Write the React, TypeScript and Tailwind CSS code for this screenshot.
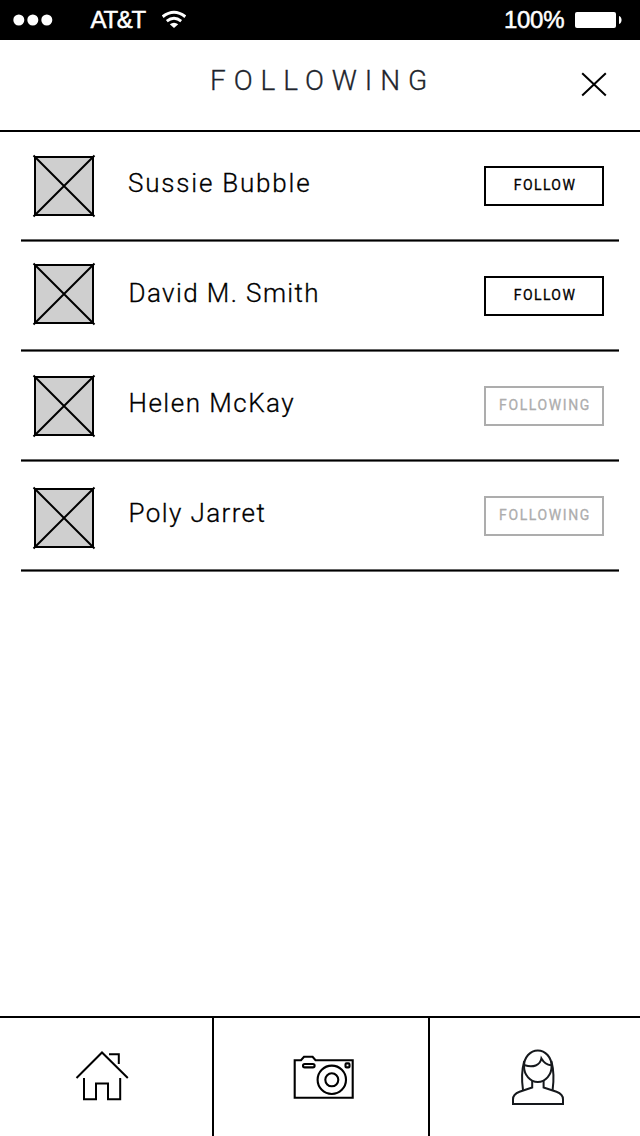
import React from "react";

type Person = {
  name: string;
  following: boolean;
  avatarOffset: string;
  nameStyle: string;
};

const people: Person[] = [
  { name: "Sussie Bubble", following: false, avatarOffset: "mt-[22px]", nameStyle: "ml-[32px] tracking-[1.8px]" },
  { name: "David M. Smith", following: false, avatarOffset: "mt-[20px]", nameStyle: "ml-[32.5px] tracking-[1.4px]" },
  { name: "Helen McKay", following: true, avatarOffset: "mt-[22px]", nameStyle: "ml-[32.5px] tracking-[1.5px]" },
  { name: "Poly Jarret", following: true, avatarOffset: "mt-[24px]", nameStyle: "ml-[32.5px] tracking-[1.4px]" },
];

function StatusBar() {
  return (
    <div className="flex h-10 shrink-0 items-center bg-black font-['Liberation_Sans',sans-serif] text-[24px] leading-none text-white">
      <svg className="ml-3 block" width="42" height="40" viewBox="0 0 42 40" fill="white">
        <circle cx="6.8" cy="20" r="5.5" />
        <circle cx="20.8" cy="20" r="5.5" />
        <circle cx="34.8" cy="20" r="5.5" />
      </svg>
      <span className="ml-[36.5px] w-[71.5px] tracking-[-1.3px] [-webkit-text-stroke:0.5px_white]">AT&amp;T</span>
      <svg className="block" width="24" height="40" viewBox="162 0 24 40" fill="none" stroke="white">
        <path d="M162.7 16.7Q174 7.8 185.3 16.7" strokeWidth="3" />
        <path d="M166.8 21.2Q174 15.4 181.2 21.2" strokeWidth="2.8" />
        <path d="M169.8 24.3Q174 21 178.2 24.3L174 28Z" fill="white" stroke="none" />
      </svg>
      <div className="ml-auto flex items-center">
        <span className="w-[70px] tracking-[-0.3px] [-webkit-text-stroke:0.5px_white]">100%</span>
        <svg className="mr-[16px] block" width="50" height="40" viewBox="574 0 50 40" fill="white">
          <rect x="575" y="12" width="41" height="16" rx="2" />
          <path d="M619 16C622.4 16.8 622.4 23.2 619 24Z" />
        </svg>
      </div>
    </div>
  );
}

function Header() {
  return (
    <header className="flex h-[92px] shrink-0 items-start justify-between border-b-2 border-black">
      <h1 className="ml-[210px] mt-[25px] whitespace-nowrap text-[28px] font-light leading-8 tracking-[7.9px] text-[#20242c] [-webkit-text-stroke:0.3px_#20242c]">
        FOLLOWING
      </h1>
      <button className="mr-[32px] mt-[31px]" aria-label="Close">
        <svg className="block" width="28" height="28" viewBox="0 0 28 28" stroke="black" strokeWidth="2">
          <path d="M2.2 2.2L25.8 24.6M25.8 2.2L2.2 24.6" />
        </svg>
      </button>
    </header>
  );
}

function Avatar() {
  return (
    <svg className="block" width="64" height="64" viewBox="0 0 64 64" stroke="black" strokeWidth="2" fill="none">
      <rect x="3" y="3" width="58" height="58" fill="#cfcfcf" />
      <path d="M1.5 1.5L62.5 62.5M62.5 1.5L1.5 62.5" />
    </svg>
  );
}

function Divider() {
  return (
    <div className="flex h-[3px] flex-col">
      <div className="h-px bg-[#666666]" />
      <div className="h-px bg-black" />
      <div className="h-px bg-[#666666]" />
    </div>
  );
}

function PersonRow({ person }: { person: Person }) {
  return (
    <li className="flex h-[110px] flex-col px-[21px]">
      <div className="flex flex-1 items-start pl-[11px] pr-[15px]">
        <div className={person.avatarOffset}>
          <Avatar />
        </div>
        <span
          className={`mt-[35px] whitespace-nowrap text-[26px] font-light leading-8 text-black [-webkit-text-stroke:0.3px_black] ${person.nameStyle}`}
        >
          {person.name}
        </span>
        {person.following ? (
          <button className="ml-auto mt-[34px] flex h-10 w-[120px] justify-center border-2 border-[#adadad] pl-[2px] text-[14px] font-normal leading-[34px] tracking-[1.6px] text-[#adadad] [-webkit-text-stroke:0.3px_#adadad]">
            FOLLOWING
          </button>
        ) : (
          <button className="ml-auto mt-[34px] flex h-10 w-[120px] justify-center border-2 border-black pl-[2px] text-[14px] font-normal leading-[34px] tracking-[1.4px] text-black [-webkit-text-stroke:0.3px_black]">
            FOLLOW
          </button>
        )}
      </div>
      <Divider />
    </li>
  );
}

function TabBar() {
  return (
    <nav className="flex h-[120px] shrink-0 border-t-2 border-black">
      <button className="h-full w-[214px] border-r-2 border-black pl-[74px]" aria-label="Home">
        <svg className="block" width="56" height="54" viewBox="74 1050 56 54" fill="none" stroke="black" strokeWidth="2">
          <path d="M76.5 1078L102 1052.5L127.8 1078M109 1054.3H118.8V1064M84 1078V1099.3H96V1083.6H108V1099.3H120.2V1078" />
        </svg>
      </button>
      <button className="h-full w-[216px] border-r-2 border-black pl-[78px]" aria-label="Camera">
        <svg className="block" width="64" height="46" viewBox="292 1054 64 46" fill="none" stroke="black" strokeWidth="2.1">
          <path d="M294.7 1060.2H301L304 1056.8H312.6L315.5 1060.2H352.7V1097.8H294.7Z" />
          <rect x="303" y="1064" width="11.6" height="3.4" rx="1.7" />
          <circle cx="331.8" cy="1079.8" r="14.2" />
          <circle cx="331.8" cy="1079.8" r="6.5" />
          <rect x="345.5" y="1063.4" width="4" height="4" rx="1" />
        </svg>
      </button>
      <button className="h-full flex-1 pl-[80px]" aria-label="Profile">
        <svg className="block" width="56" height="58" viewBox="510 1048 56 58" fill="none" stroke="#15181c" strokeWidth="2">
          <ellipse cx="537.8" cy="1066.2" rx="13.8" ry="15.8" />
          <path d="M524.8 1065.3C533 1067.8 540.2 1065.5 541.4 1058.4C543.5 1062 546.5 1064.7 551 1065.2" />
          <path d="M524.2 1061C521.5 1071 521.5 1080 523 1090M551.4 1061C554 1071 554 1080 552.6 1090" />
          <path d="M532.2 1080.5V1087.5L519.5 1091.8Q513 1094 513 1099.5V1103.9H563V1099.5Q563 1094 556.5 1091.8L543.6 1087.5V1080.5" />
        </svg>
      </button>
    </nav>
  );
}

export default function App() {
  return (
    <div className="flex h-[1136px] w-[640px] flex-col bg-white font-[Roboto,sans-serif]">
      <StatusBar />
      <Header />
      <ul className="flex-1">
        {people.map((person) => (
          <PersonRow key={person.name} person={person} />
        ))}
      </ul>
      <TabBar />
    </div>
  );
}
